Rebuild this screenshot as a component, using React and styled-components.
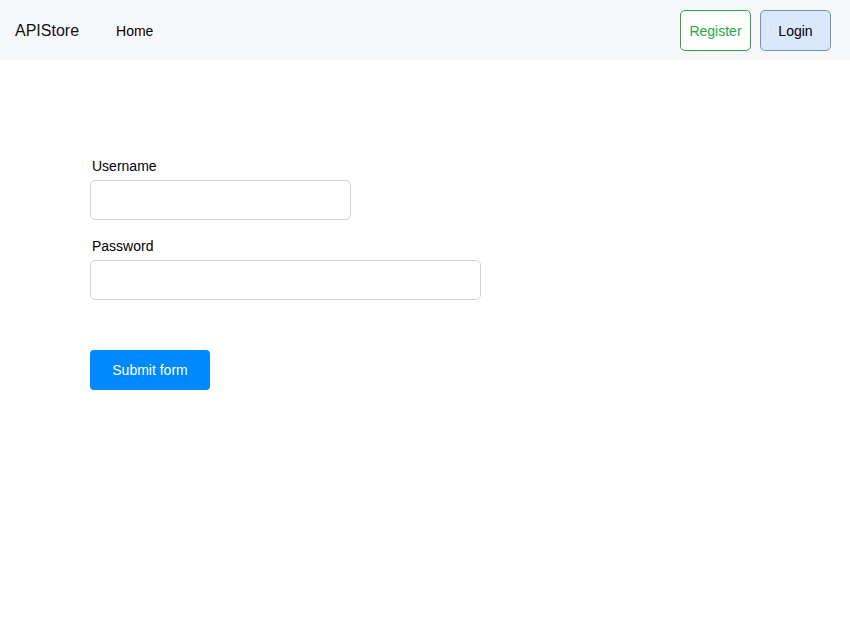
import React from 'react';
import styled, { createGlobalStyle } from 'styled-components';

const GlobalStyle = createGlobalStyle`
  body {
    margin: 0;
    font-family: "Liberation Sans", Arial, sans-serif;
    background: #ffffff;
    color: #000;
  }
`;

const StyledNav = styled.nav`
  display: flex;
  align-items: center;
  height: 60px;
  padding: 0 19px 0 15px;
  background-color: #f7f8fa;
`;
const StyledBrand = styled.span`
  font-size: 16px;
  color: #111;
  padding-top: 1px;
`;
const StyledNavLink = styled.a`
  margin-left: 37px;
  padding-top: 2px;
  font-size: 14px;
  color: #000;
`;
const StyledNavRight = styled.div`
  display: flex;
  gap: 9px;
  margin-left: auto;
  padding-top: 1px;
`;
const StyledNavButton = styled.button`
  height: 41px;
  padding: 0 8px;
  min-width: ${({ wide }) => wide}px;
  border-radius: 5px;
  font-family: inherit;
  font-size: 14px;
  border: 1.5px solid ${({ variant }) => (variant === 'outline' ? '#28a745' : '#6a94cf')};
  background-color: ${({ variant }) => (variant === 'outline' ? '#ffffff' : '#dbe8fb')};
  color: ${({ variant }) => (variant === 'outline' ? '#28a745' : '#000')};
`;

const StyledForm = styled.form`
  display: flex;
  flex-direction: column;
  align-items: flex-start;
  padding: 98px 0 0 90px;
`;
const StyledLabel = styled.label`
  font-size: 14px;
  margin: 0 0 6px 2px;
`;
const StyledInput = styled.input`
  box-sizing: border-box;
  width: ${({ width }) => width}px;
  height: 40px;
  border: 1.5px solid #d0d4db;
  border-radius: 5px;
  margin-bottom: 18px;
  background: #fff;
`;
const StyledSubmit = styled.button`
  margin-top: 32px;
  width: 120px;
  height: 40px;
  border: none;
  border-radius: 4px;
  background-color: #0088ff;
  color: #fff;
  font-family: inherit;
  font-size: 14px;
`;

export default function App() {
  return (
    <>
      <GlobalStyle />
      <StyledNav>
        <StyledBrand>APIStore</StyledBrand>
        <StyledNavLink>Home</StyledNavLink>
        <StyledNavRight>
          <StyledNavButton variant="outline" wide={71}>Register</StyledNavButton>
          <StyledNavButton variant="solid" wide={71}>Login</StyledNavButton>
        </StyledNavRight>
      </StyledNav>
      <StyledForm>
        <StyledLabel>Username</StyledLabel>
        <StyledInput width={261} />
        <StyledLabel>Password</StyledLabel>
        <StyledInput width={391} type="password" />
        <StyledSubmit type="button">Submit form</StyledSubmit>
      </StyledForm>
    </>
  );
}
